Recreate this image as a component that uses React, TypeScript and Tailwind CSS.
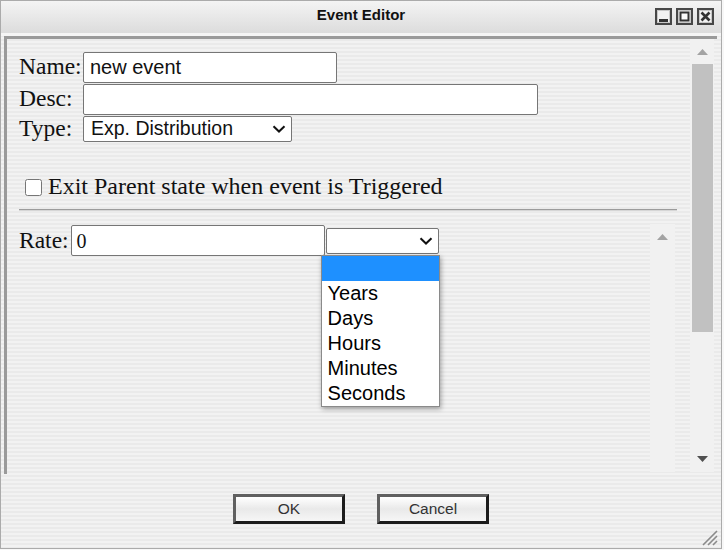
import React from "react";

const serif = "font-['Liberation_Serif','Times_New_Roman',serif]";
const sans = "font-['Liberation_Sans',Arial,sans-serif]";

const Chevron = () => (
  <svg width="14" height="8" viewBox="0 0 14 8" className="shrink-0">
    <path d="M1.5 1.2 L7 6.5 L12.5 1.2" fill="none" stroke="#111" strokeWidth="2" />
  </svg>
);

const TitleButton = ({ kind }: { kind: "min" | "max" | "close" }) => (
  <svg width="17" height="17" viewBox="0 0 17 17">
    <rect x="1" y="1" width="15" height="15" fill="#f2f2f2" stroke="#474747" strokeWidth="2" />
    <rect x="2.5" y="2.5" width="12" height="12" fill="none" stroke="#c8c8c8" strokeWidth="1" />
    {kind === "min" && <rect x="4" y="11" width="9" height="3" fill="#333" />}
    {kind === "max" && <rect x="4.5" y="4.5" width="8" height="8" fill="#fafafa" stroke="#333" strokeWidth="2" />}
    {kind === "close" && (
      <path d="M4.5 4.5 L12.5 12.5 M12.5 4.5 L4.5 12.5" stroke="#333" strokeWidth="2.6" />
    )}
  </svg>
);

const Arrow = ({ up, color }: { up?: boolean; color: string }) => (
  <svg width="11" height="6" viewBox="0 0 11 6">
    <path d={up ? "M0 6 L5.5 0 L11 6 Z" : "M0 0 L11 0 L5.5 6 Z"} fill={color} />
  </svg>
);

const Button = ({ label }: { label: string }) => (
  <button
    className={`w-[112px] h-[30px] border-[3px] border-t-[#606060] border-l-[#606060] border-b-[#1c1c1c] border-r-[#1c1c1c] bg-gradient-to-b from-white via-[#e9e9e9] to-[#f6f6f6] text-[15.5px] text-[#333] ${sans}`}
  >
    {label}
  </button>
);

const units = ["Years", "Days", "Hours", "Minutes", "Seconds"];

export default function App() {
  return (
    <div className="w-[724px] h-[550px] bg-[#f7f7f7]">
      <div className="relative w-[722px] h-[549px] border border-[#ababab] flex flex-col bg-[repeating-linear-gradient(180deg,#f2f2f2_0px,#f2f2f2_2px,#eaeaea_2px,#eaeaea_4px)]">
        {/* title bar */}
        <div className="h-[32px] grid grid-cols-[1fr_auto_1fr] items-center bg-gradient-to-b from-[#f4f4f4] to-[#dcdcdc]">
          <div />
          <div className={`pb-[3px] text-[15px] font-bold text-[#111] ${sans}`}>Event Editor</div>
          <div className="flex justify-end gap-[4px] pr-[7px] pb-[2px]">
            <TitleButton kind="min" />
            <TitleButton kind="max" />
            <TitleButton kind="close" />
          </div>
        </div>
        <div className="h-[3px] bg-[#f5f5f5]" />

        {/* frame */}
        <div className="ml-[3px] mr-[4px] h-[438px] border-t-[3px] border-l-[3px] border-[#9a9a9a] flex">
          <div className="flex-1 flex flex-col pl-[12px] pr-[13px] pt-[12px] pb-[2px]">
            <div className={`flex flex-col gap-0 ${serif} text-[23.5px] text-[#111]`}>
              <div className="h-[32px] flex items-center">
                <span className="w-[64px] leading-none">Name:</span>
                <div className={`w-[254px] h-[31px] bg-white border border-[#767676] rounded-[2px] px-[6px] flex items-center text-[20px] ${sans}`}>
                  new event
                </div>
              </div>
              <div className="h-[32px] flex items-center">
                <span className="w-[64px] leading-none">Desc:</span>
                <div className="w-[455px] h-[31px] bg-white border border-[#767676] rounded-[2px]" />
              </div>
              <div className="h-[28px] flex items-center">
                <span className="w-[64px] leading-none">Type:</span>
                <div className={`w-[209px] h-[26px] bg-white border border-[#767676] rounded-[2px] pl-[7px] pr-[5px] flex items-center justify-between text-[19.5px] ${sans}`}>
                  <span>Exp. Distribution</span>
                  <Chevron />
                </div>
              </div>

              <label className="mt-[28px] h-[30px] flex items-center gap-[6px] pl-[6px] text-[24px]">
                <input type="checkbox" className="w-[17px] h-[17px] m-0 mt-[3px]" />
                <span className="leading-none">Exit Parent state when event is Triggered</span>
              </label>
            </div>

            <div className="mt-[8px] border-t border-b border-t-[#9c9c9c] border-b-[#d6d6d6]" />

            {/* rate panel */}
            <div className="mt-[13px] flex-1 flex pr-[2px]">
              <div className="flex-1 pt-[1px]">
                <div className={`flex items-center ${serif} text-[23.5px] text-[#111]`}>
                  <span className="leading-none pr-[2px]">Rate:</span>
                  <div className={`w-[254px] h-[31px] bg-white border border-[#767676] rounded-[2px] px-[5px] flex items-center text-[20px] ${serif}`}>
                    0
                  </div>
                  <div className="relative ml-[1px]">
                    <div className="w-[113px] h-[26px] bg-white border border-[#767676] rounded-[2px] pr-[5px] flex items-center justify-end">
                      <Chevron />
                    </div>
                    <div className={`absolute left-[-5px] top-[27px] w-[119px] bg-white border border-[#8a8a8a] shadow-[1px_2px_5px_rgba(0,0,0,0.35)] text-[20px] text-black ${sans}`}>
                      <div className="h-[25px] bg-[#1e90ff]" />
                      {units.map((u) => (
                        <div key={u} className="h-[25px] leading-[25px] pl-[6px]">
                          {u}
                        </div>
                      ))}
                    </div>
                  </div>
                </div>
              </div>
              <div className="w-[25px] bg-[#f1f1f1] flex justify-center pt-[10px]">
                <Arrow up color="#a3a3a3" />
              </div>
            </div>
          </div>

          {/* main scrollbar */}
          <div className="w-[24px] mr-[3px] mb-[2px] bg-[#f1f1f1] flex flex-col items-center">
            <div className="pt-[10px] h-[25px]">
              <Arrow up color="#a3a3a3" />
            </div>
            <div className="w-[21px] ml-[1px] h-[268px] bg-[#c1c1c1]" />
            <div className="flex-1" />
            <div className="pb-[10px]">
              <Arrow color="#505050" />
            </div>
          </div>
        </div>

        {/* footer */}
        <div className="flex-1 flex justify-center gap-[32px] pt-[20px]">
          <Button label="OK" />
          <Button label="Cancel" />
        </div>

        <svg className="absolute right-[3px] bottom-[2px]" width="18" height="18" viewBox="0 0 18 18">
          <path d="M17 3 L3 17 M17 8 L8 17 M17 13 L13 17" stroke="#8a8a8a" strokeWidth="1.6" />
        </svg>
      </div>
    </div>
  );
}
